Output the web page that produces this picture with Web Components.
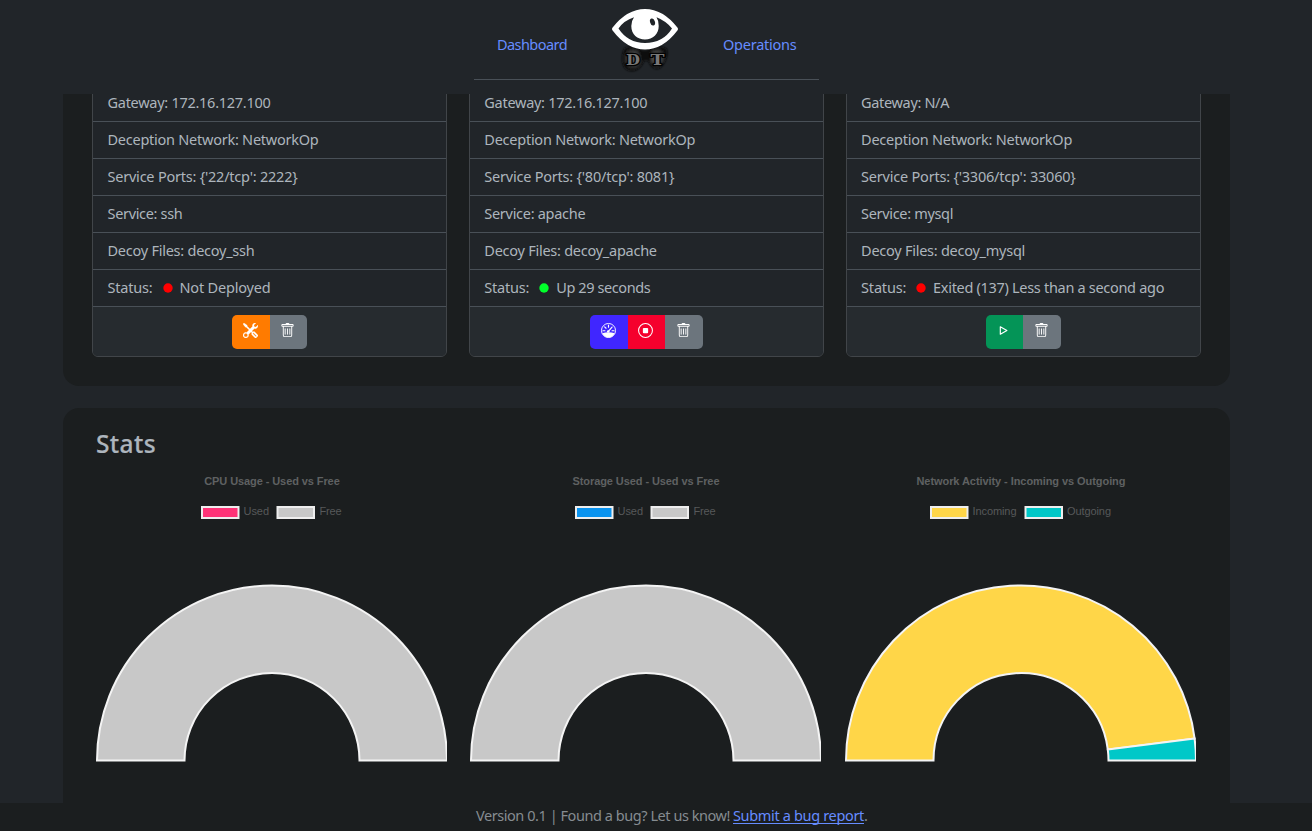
<!DOCTYPE html>
<html lang="en">
<head>
<meta charset="utf-8">
<title>Dashboard</title>
<style>
html,body{margin:0;height:100%;overflow:hidden;background:#212529}
body{font:14.5px/21px "Noto Sans","Open Sans",sans-serif;color:#adb5bd}
</style>
</head>
<body>
<dt-app></dt-app>
<script>
const define = (name, cls) => customElements.define(name, cls);
class Base extends HTMLElement {
  constructor() { super(); this.attachShadow({mode: 'open'}); }
  connectedCallback() { this.shadowRoot.innerHTML = this.render(); }
}

/* Text tracked so that it fills a given width. */
define('dt-text', class extends Base {
  render() { return '<style>:host{display:inline-block;white-space:pre}span{display:inline-block}</style><span><slot></slot></span>'; }
  connectedCallback() {
    super.connectedCallback();
    const w = +this.getAttribute('w');
    const span = this.shadowRoot.querySelector('span');
    this.style.width = w + 'px';
    const own = span.getBoundingClientRect().width;
    span.style.letterSpacing = ((w - own) / this.textContent.length) + 'px';
  }
});

const icons = {
  tools: '<path fill-rule="evenodd" d="M1 0 0 1l2.2 3.081a1 1 0 0 0 .815.419h.07a1 1 0 0 1 .708.293l2.675 2.675-2.617 2.654A3.003 3.003 0 0 0 0 13a3 3 0 1 0 5.878-.851l2.654-2.617.968.968-.305.914a1 1 0 0 0 .242 1.023l3.27 3.27a.997.997 0 0 0 1.414 0l1.586-1.586a.997.997 0 0 0 0-1.414l-3.27-3.27a1 1 0 0 0-1.023-.242L10.5 9.5l-.96-.96 2.68-2.643A3.005 3.005 0 0 0 16 3q0-.405-.102-.777l-2.14 2.141L12 4l-.364-1.757L13.777.102a3 3 0 0 0-3.675 3.68L7.462 6.46 4.793 3.793a1 1 0 0 1-.293-.707v-.071a1 1 0 0 0-.419-.814zm9.646 10.646a.5.5 0 0 1 .708 0l2.914 2.915a.5.5 0 0 1-.707.707l-2.915-2.914a.5.5 0 0 1 0-.708M3 11l.471.242.529.026.287.445.445.287.026.529L5 13l-.242.471-.026.529-.445.287-.287.445-.529.026L3 15l-.471-.242L2 14.732l-.287-.445L1.268 14l-.026-.529L1 13l.242-.471.026-.529.445-.287.287-.445.529-.026z" stroke="#fff" stroke-width=".3"/>',
  trash: '<path d="M5.5 5.5A.5.5 0 0 1 6 6v6a.5.5 0 0 1-1 0V6a.5.5 0 0 1 .5-.5m2.5 0a.5.5 0 0 1 .5.5v6a.5.5 0 0 1-1 0V6a.5.5 0 0 1 .5-.5m3 .5a.5.5 0 0 0-1 0v6a.5.5 0 0 0 1 0z"/><path fill-rule="evenodd" d="M14.5 3a1 1 0 0 1-1 1H13v9a2 2 0 0 1-2 2H5a2 2 0 0 1-2-2V4h-.5a1 1 0 0 1-1-1V2a1 1 0 0 1 1-1H6a1 1 0 0 1 1-1h2a1 1 0 0 1 1 1h3.5a1 1 0 0 1 1 1zM4.118 4 4 4.059V13a1 1 0 0 0 1 1h6a1 1 0 0 0 1-1V4.059L11.882 4zM2.5 3h11V2h-11z"/>',
  gauge: '<circle cx="8" cy="8" r="7.5" fill="none" stroke="#fff"/><path d="M1.3 10.9Q8 8.6 14.7 10.9Q12.4 15.4 8 15.5Q3.6 15.4 1.3 10.9z"/><path d="M8 2.3v2.2M3.9 4.1l1.5 1.5M2 8.2h2.2M11.8 8.2h2.2M7.4 9.4l4.4-5.1" stroke="#fff" stroke-width="1.2" stroke-linecap="round" fill="none"/><circle cx="7.7" cy="8.9" r="1.3"/>',
  stop: '<circle cx="8" cy="8" r="7.4" fill="none" stroke="#fff" stroke-width="1.1"/><rect x="5.2" y="5.2" width="5.6" height="5.6" rx="1"/>',
  play: '<path d="M4.6 4.1v7.8L11.6 8z" fill="none" stroke="#fff" stroke-width="1.25" stroke-linejoin="round"/>'
};
define('dt-button', class extends Base {
  render() { return `<style>:host{display:flex;width:37.5px;height:34px;box-sizing:border-box;padding:0 1px 3px 0;align-items:center;justify-content:center;background:${this.getAttribute('color')}}svg{display:block}</style>
    <svg width="15" height="15" viewBox="0 0 16 16" fill="#fff">${icons[this.getAttribute('icon')]}</svg>`; }
});

define('dt-row', class extends Base {
  render() { return '<style>:host{display:flex;box-sizing:border-box;height:37px;line-height:16px;padding:9px 0 0 14.5px;border-bottom:1px solid #495057;white-space:pre}</style><slot></slot>'; }
});

define('dt-status', class extends Base {
  render() { return `<style>:host{display:flex;align-items:center;height:16px}svg{display:block;margin:1px 7px 0 10px}</style>
    <dt-text w="45">Status:</dt-text><svg width="10" height="10"><circle cx="5" cy="5" r="4.7" fill="${this.getAttribute('color')}"/></svg><slot></slot>`; }
});

define('dt-card', class extends Base {
  render() { return `<style>
    :host{display:flex;flex-direction:column;box-sizing:border-box;width:355px;height:273px;border:1px solid #414549;border-radius:6px;background:#212529;overflow:hidden}
    footer{flex:1;display:flex;justify-content:center;align-items:flex-start;padding-top:8px;background:#262b2f}
    .group{display:flex;border-radius:5px;overflow:hidden}
    </style><slot></slot><footer><div class="group"><slot name="action"></slot></div></footer>`; }
});

define('dt-panel', class extends Base {
  render() { return '<style>:host{display:block;box-sizing:border-box;width:1167px;margin-left:63px;background:#1b1e1f;overflow:hidden}</style><slot></slot>'; }
});

define('dt-chart', class extends Base {
  render() {
    const a = n => this.getAttribute(n);
    const [x1, t1, x2, t2, w1, w2] = a('legend').split(',').map(Number);
    const [n1, n2] = a('names').split(',');
    const cx = 176, cy = 292.5, R = 175, r = 87.5;
    const slice = (from, to, fill) => {
      const p = (rad, f) => `${(cx - rad * Math.cos(Math.PI * f)).toFixed(2)} ${(cy - rad * Math.sin(Math.PI * f)).toFixed(2)}`;
      return `<path d="M${p(R, from)}A${R} ${R} 0 0 1 ${p(R, to)}L${p(r, to)}A${r} ${r} 0 0 0 ${p(r, from)}Z" fill="${fill}" stroke="#f4f4f4" stroke-width="2"/>`;
    };
    const split = +a('split');
    const arcs = split ? slice(0, split, a('c1')) + slice(split, 1, a('c2')) : slice(0, 1, a('c2'));
    return `<style>:host{display:block;width:351px;height:294px}svg{display:block;font-family:"Liberation Sans",Arial,sans-serif;font-size:11px}text{fill:#57595a}.t{font-weight:bold;fill:#5f6162}</style>
    <svg width="351" height="294" viewBox="0 0 351 294">
      <text class="t" x="${cx}" y="17" text-anchor="middle" textLength="${a('tw')}">${a('title')}</text>
      <g stroke="#eee" stroke-width="2"><rect x="${x1}" y="39" width="36.5" height="11" fill="${a('c1')}"/><rect x="${x2}" y="39" width="36.5" height="11" fill="${a('c2')}"/></g>
      <text x="${t1}" y="47" textLength="${w1}">${n1}</text><text x="${t2}" y="47" textLength="${w2}">${n2}</text>
      ${arcs}
    </svg>`;
  }
});

define('dt-logo', class extends Base {
  render() { return `<style>:host{display:block;width:70px;height:70px}svg{display:block;overflow:visible}</style>
  <svg width="70" height="70" viewBox="0 0 70 70">
    <defs><filter id="s" x="-30%" y="-30%" width="160%" height="160%"><feGaussianBlur stdDeviation=".8"/></filter>
    <radialGradient id="g"><stop offset="0" stop-color="#666"/><stop offset=".6" stop-color="#383838"/><stop offset="1" stop-color="#0d0d0d"/></radialGradient></defs>
    <g filter="url(#s)" fill="url(#g)" stroke="#0e0e0e" stroke-width="1.5"><path d="M15 41Q22 37 30 41Q35 46 33 54Q29 62 22 62.5Q14 62 13 54Q12 46 15 41Z"/><path d="M39 41Q47 37 56 41Q58 45 55 52Q52 59.5 47 60.5Q42 60 39 53Q34 46 39 41Z"/><path d="M30 43H40V52H32Z" fill="#111"/></g>
    <g><path d="M4 21Q18 3 35 3Q52 3 66 21Q52 39.5 35 39.5Q18 39.5 4 21Z" fill="#fff" stroke="#fff" stroke-width="4" stroke-linejoin="round"/>
    <path d="M8.5 20.5Q14 12.5 24 9.3Q21.3 13 21.3 18C21.3 26.5 27.5 31.5 35 31.5C43 31.5 48.7 26 48.7 18Q48.7 12.5 46.5 9.3Q56 13 62 20.5Q53 35 35 35Q18 35 8.5 20.5Z" fill="#212529"/>
    <ellipse cx="42.5" cy="14" rx="2.4" ry="3.6" transform="rotate(-18 42.5 14)" fill="#212529"/></g>
    <g font-family="DejaVu Serif,serif" font-weight="bold" font-size="15" fill="#777" stroke="#020202" stroke-width="2.6" stroke-linejoin="round" paint-order="stroke"><text x="16" y="57" textLength="14" lengthAdjust="spacingAndGlyphs">D</text><text x="40.5" y="57" textLength="14" lengthAdjust="spacingAndGlyphs">T</text></g>
  </svg>`; }
});

define('dt-header', class extends Base {
  render() { return `<style>
    :host{display:flex;justify-content:center;height:94px;flex:none;color:#668cff}
    nav{display:flex;box-sizing:border-box;width:345px;height:80px;margin-right:19px;border-bottom:1px solid #495057;padding-left:23px;line-height:21px}
    dt-text{margin-top:34px}dt-logo{margin:8px 43px 0 43px}
    </style><nav><dt-text w="70">Dashboard</dt-text><dt-logo></dt-logo><dt-text w="73.5">Operations</dt-text></nav>`; }
});

define('dt-footer', class extends Base {
  render() { return `<style>
    :host{display:flex;box-sizing:border-box;height:28px;line-height:24px;flex:none;background:#1b1e1f;color:#868c91;padding-left:476px}
    a{color:#668cff;margin-left:3px}
    a dt-text{box-sizing:border-box;line-height:16px;margin-top:4px;height:17px;border-bottom:1px solid #668cff}
    </style><dt-text w="254">Version 0.1 | Found a bug? Let us know!</dt-text><a><dt-text w="131">Submit a bug report</dt-text></a><span>.</span>`; }
});

define('dt-app', class extends Base {
  render() {
    const trash = '<dt-button slot="action" icon="trash" color="#6c757d"></dt-button>';
    const row = ([t, w]) => `<dt-row><dt-text w="${w}">${t}</dt-text></dt-row>`;
    const card = (rows, color, status, w, buttons) => `<dt-card>${rows.map(row).join('')}<dt-row><dt-status color="${color}"><dt-text w="${w}">${status}</dt-text></dt-status></dt-row>${buttons.map(b => `<dt-button slot="action" icon="${b[0]}" color="${b[1]}"></dt-button>`).join('')}${trash}</dt-card>`;
    const net = ['Deception Network: NetworkOp', 211];
    return `<style>
    :host{display:flex;flex-direction:column;height:831px;width:1312px;overflow:hidden}
    main{flex:1;min-height:0;overflow:hidden;display:flex;flex-direction:column;gap:22px}
    dt-panel{flex:none}
    .decoys{height:292px;border-radius:0 0 16px 16px}
    .cards{display:flex;gap:21.8px;margin:-10px 0 0 29px}
    .stats{height:430px;border-radius:16px 16px 0 0}
    h2{margin:19px 0 0 33px;font-weight:500;font-size:24.5px;line-height:34px;color:#adb5bd;-webkit-text-stroke:.2px #adb5bd}
    .charts{display:grid;grid-template-columns:374px 375px 351px;margin:7px 0 0 33px}
    </style>
    <dt-header></dt-header>
    <main>
      <dt-panel class="decoys"><div class="cards">
      ${card([['Gateway: 172.16.127.100', 163], net, ["Service Ports: {'22/tcp': 2222}", 190], ['Service: ssh', 75], ['Decoy Files: decoy_ssh', 147]], '#f00', 'Not Deployed', 91, [['tools', '#ff7b00']])}
      ${card([['Gateway: 172.16.127.100', 163], net, ["Service Ports: {'80/tcp': 8081}", 190], ['Service: apache', 101], ['Decoy Files: decoy_apache', 172.5]], '#00ff2a', 'Up 29 seconds', 94, [['gauge', '#4026ff'], ['stop', '#f5002d']])}
      ${card([['Gateway: N/A', 88], net, ["Service Ports: {'3306/tcp': 33060}", 214.5], ['Service: mysql', 92], ['Decoy Files: decoy_mysql', 164]], '#f00', 'Exited (137) Less than a second ago', 231, [['play', '#049457']])}
      </div></dt-panel>
      <dt-panel class="stats">
        <h2><dt-text w="60">Stats</dt-text></h2>
        <div class="charts">
          <dt-chart title="CPU Usage - Used vs Free" tw="135.5" names="Used,Free" legend="106,147.5,181.5,223.5,25.5,22" c1="#ff3377" c2="#c8c8c8"></dt-chart>
          <dt-chart title="Storage Used - Used vs Free" tw="147" names="Used,Free" legend="106,147.5,181.5,223.5,25.5,22" c1="#0a94f0" c2="#c8c8c8"></dt-chart>
          <dt-chart title="Network Activity - Incoming vs Outgoing" tw="209" names="Incoming,Outgoing" legend="86,127.5,180.5,222,44,44" c1="#ffd648" c2="#00c8c8" split=".96"></dt-chart>
        </div>
      </dt-panel>
    </main>
    <dt-footer></dt-footer>`;
  }
});
</script>
</body>
</html>
